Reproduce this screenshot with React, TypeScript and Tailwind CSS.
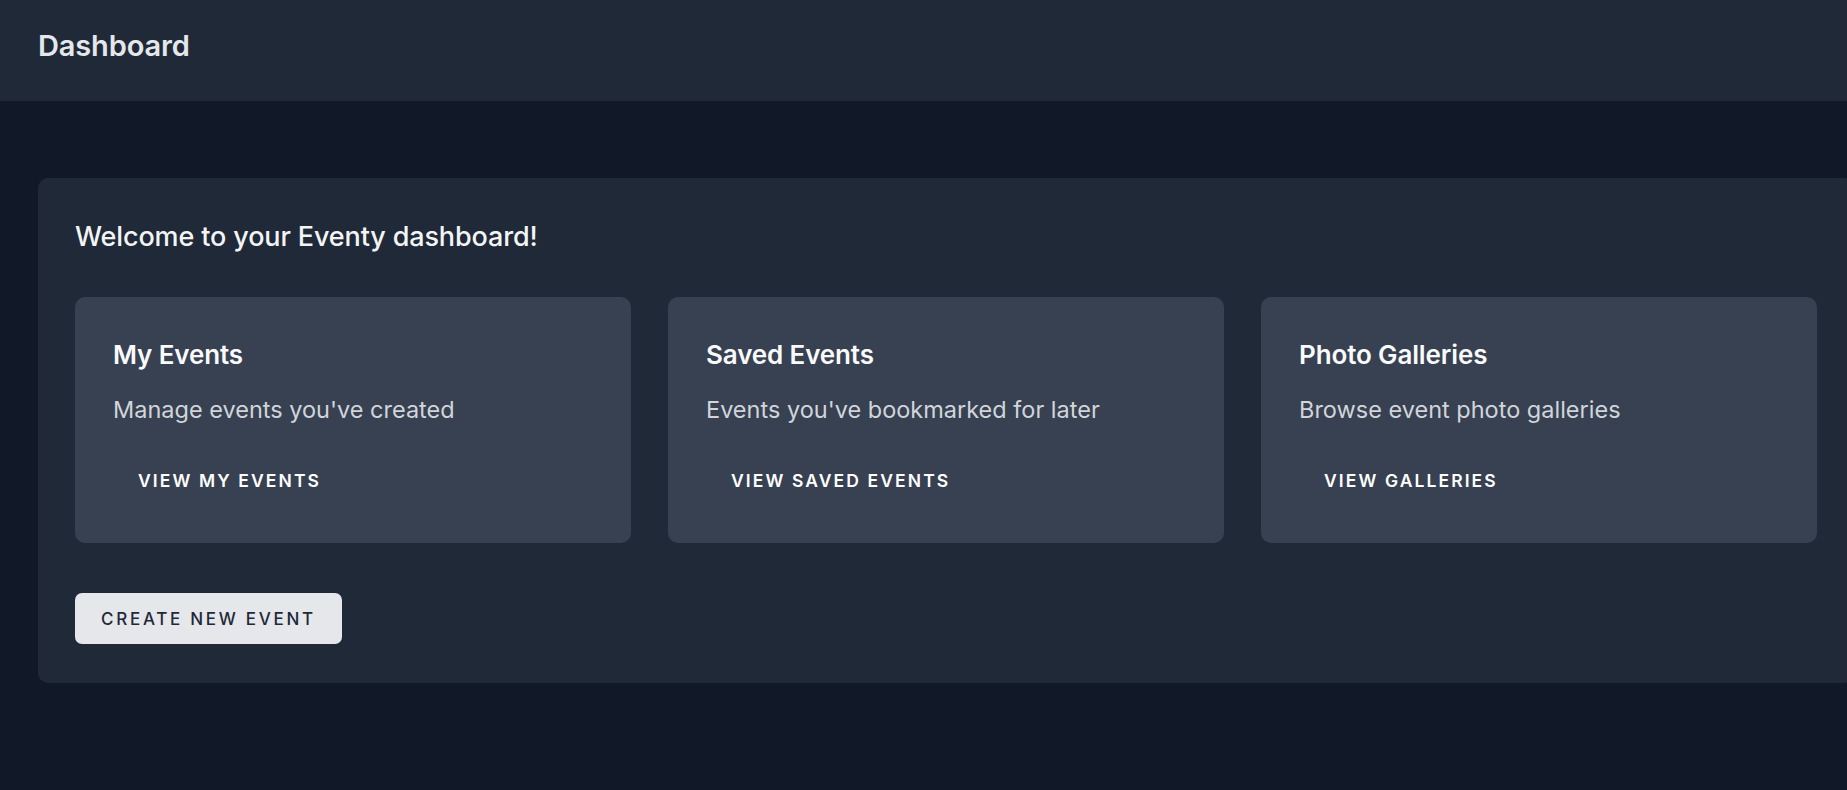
const cards = [
  {
    title: "My Events",
    description: "Manage events you've created",
    action: "View My Events",
  },
  {
    title: "Saved Events",
    description: "Events you've bookmarked for later",
    action: "View Saved Events",
  },
  {
    title: "Photo Galleries",
    description: "Browse event photo galleries",
    action: "View Galleries",
  },
];

export default function App() {
  return (
    <div className="min-h-screen w-full overflow-hidden bg-[#111827] font-['Inter',sans-serif]">
      {/* Top bar */}
      <header className="flex h-[101px] items-center bg-[#1f2937] px-[38px] pb-[11px]">
        <h1 className="text-[29px] font-semibold leading-none tracking-[-0.005em] text-[#e5e7eb]">
          Dashboard
        </h1>
      </header>

      <main className="pl-[38px] pt-[77px]">
        <section className="w-[1816px] rounded-[10px] bg-[#1f2937] px-[37px] pt-[37px] pb-[39px]">
          <h2 className="mt-[4px] mb-[42px] text-[27px] font-medium leading-[36px] tracking-[-0.005em] text-[#f3f4f6]">
            Welcome to your Eventy dashboard!
          </h2>

          {/* Cards */}
          <div className="grid grid-cols-3 gap-[37px]">
            {cards.map((card) => (
              <div
                key={card.title}
                className="flex flex-col items-start rounded-[10px] bg-[#374151] px-[38px] pt-[40px] pb-[37px]"
              >
                <h3 className="text-[26px] font-semibold leading-[36px] tracking-[-0.005em] text-[#f9fafb]">
                  {card.title}
                </h3>
                <p className="mt-[21px] text-[23.5px] leading-[32px] text-[#d1d5db]">
                  {card.description}
                </p>
                <button className="mt-[30px] rounded-md px-[25px] py-[13px] text-[17.5px] font-semibold uppercase leading-[24px] tracking-[0.12em] text-white">
                  {card.action}
                </button>
              </div>
            ))}
          </div>

          <button className="mt-[50px] h-[51px] rounded-[7px] bg-[#e5e7eb] px-[26px] text-[17px] font-medium uppercase leading-[24px] tracking-[0.16em] text-[#1f2937]">
            Create New Event
          </button>
        </section>
      </main>
    </div>
  );
}
